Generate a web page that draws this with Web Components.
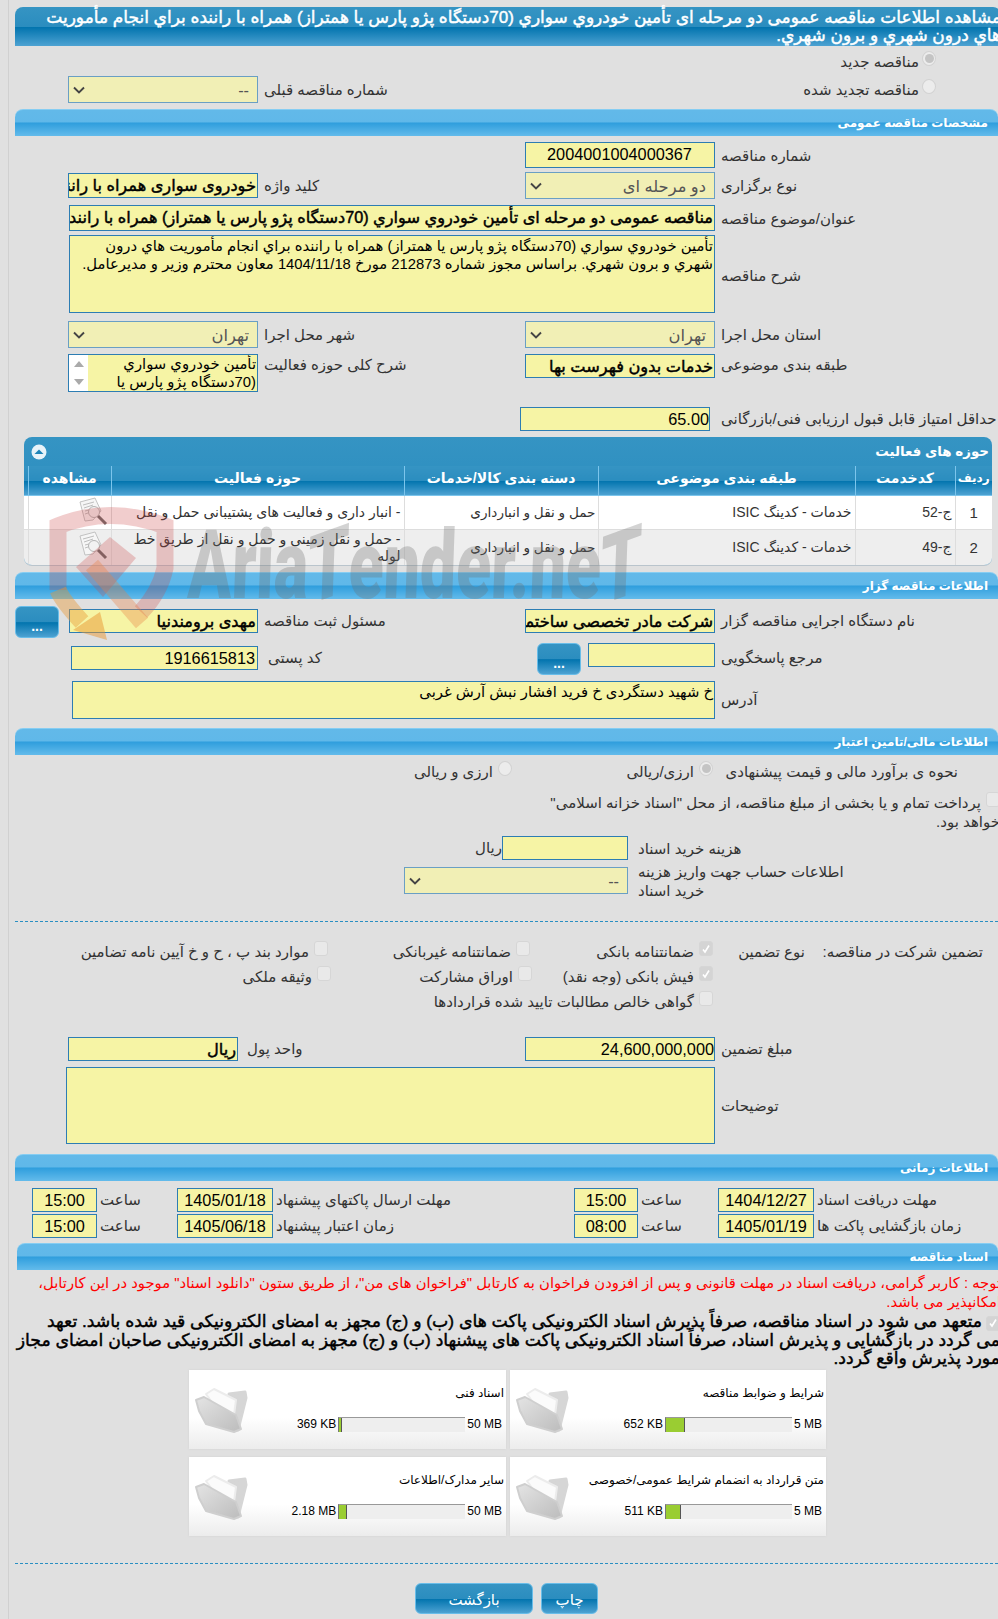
<!DOCTYPE html>
<html lang="fa" dir="rtl">
<head>
<meta charset="utf-8">
<title>AriaTender</title>
<style>
    html, body { margin: 0; padding: 0; background: #e0e0e0; overflow: hidden; }
    body {
        width: 998px;
        height: 1619px;
        position: relative;
        font-family: "Liberation Sans", "DejaVu Sans", sans-serif;
        font-size: 15px;
        color: #333;
    }
    #page {
        margin-left: 8px;
        padding-left: 6px;
        padding-top: 7px;
        height: 1612px;
        border-left: 1px solid #d0d0d0;
    }
</style>
</head>
<body>
<div id="page">
    <ta-bar kind="title">مشاهده اطلاعات مناقصه عمومی دو مرحله ای تأمین خودروي سواري (70دستگاه پژو پارس یا همتراز) همراه با راننده براي انجام مأموريت<br>هاي درون شهري و برون شهري.</ta-bar>

    <ta-form-row style="height:30px">
        <ta-option style="grid-column:1/3;margin-right:62px;margin-top:6px;gap:3px" type="radio" checked>مناقصه جدید</ta-option>
    </ta-form-row>
    <ta-form-row style="height:26px">
        <ta-option style="grid-column:1/3;margin-right:62px;margin-top:4px;gap:3px" type="radio">مناقصه تجدید شده</ta-option>
        <ta-label style="grid-column:3">شماره مناقصه قبلی</ta-label>
        <ta-select style="grid-column:4">--</ta-select>
    </ta-form-row>

    <ta-bar style="margin-top:7px">مشخصات مناقصه عمومی</ta-bar>

    <ta-form-row style="margin-top:6px;height:24px">
        <ta-label style="padding-top:2px">شماره مناقصه</ta-label>
        <ta-input align="center">2004001004000367</ta-input>
    </ta-form-row>
    <ta-form-row style="margin-top:6px;height:27px">
        <ta-label>نوع برگزاری</ta-label>
        <ta-select>دو مرحله ای</ta-select>
        <ta-label>کلید واژه</ta-label>
        <ta-input bold style="height:25px;margin-top:1px">خودروی سواری همراه با راننده</ta-input>
    </ta-form-row>
    <ta-form-row style="margin-top:6px;height:24px">
        <ta-label style="padding-top:2px">عنوان/موضوع مناقصه</ta-label>
        <ta-input bold style="grid-column:2/5;width:646px">مناقصه عمومی دو مرحله ای تأمین خودروي سواري (70دستگاه پژو پارس یا همتراز) همراه با راننده</ta-input>
    </ta-form-row>
    <ta-form-row style="margin-top:6px;height:78px">
        <ta-label style="padding-top:4px">شرح مناقصه</ta-label>
        <ta-input multi style="grid-column:2/5;width:646px">تأمین خودروي سواري (70دستگاه پژو پارس یا همتراز) همراه با راننده براي انجام مأموريت هاي درون<br>شهري و برون شهري. براساس مجوز شماره 212873 مورخ 1404/11/18 معاون محترم وزیر و مدیرعامل.</ta-input>
    </ta-form-row>
    <ta-form-row style="margin-top:8px;height:27px">
        <ta-label>استان محل اجرا</ta-label>
        <ta-select>تهران</ta-select>
        <ta-label>شهر محل اجرا</ta-label>
        <ta-select>تهران</ta-select>
    </ta-form-row>
    <ta-form-row style="margin-top:6px;height:38px">
        <ta-label style="height:22px">طبقه بندی موضوعی</ta-label>
        <ta-input bold style="height:24px">خدمات بدون فهرست بها</ta-input>
        <ta-label style="height:22px">شرح کلی حوزه فعالیت</ta-label>
        <ta-input multi scroll style="height:38px">تأمین خودروي سواري<br>(70دستگاه پژو پارس یا</ta-input>
    </ta-form-row>
    <ta-form-row style="margin-top:15px;height:24px">
        <ta-label>حداقل امتیاز قابل قبول ارزیابی فنی/بازرگانی</ta-label>
        <ta-input align="right" style="margin-right:5px">65.00</ta-input>
    </ta-form-row>

    <ta-panel heading="حوزه های فعالیت" style="margin-top:6px"></ta-panel>

    <ta-bar style="margin-top:6px">اطلاعات مناقصه گزار</ta-bar>

    <ta-form-row style="margin-top:7px;height:31px">
        <ta-label style="margin-top:3px;height:24px">نام دستگاه اجرایی مناقصه گزار</ta-label>
        <ta-input bold style="margin-top:3px;height:24px">شرکت مادر تخصصی ساختمان</ta-input>
        <ta-label style="margin-top:3px;height:24px">مسئول ثبت مناقصه</ta-label>
        <ta-input bold style="margin-top:3px;height:24px;width:189px">مهدی برومندنیا</ta-input>
        <ta-button style="justify-self:end">...</ta-button>
    </ta-form-row>
    <ta-form-row style="margin-top:6px;height:32px">
        <ta-label style="height:24px;margin-top:3px">مرجع پاسخگویی</ta-label>
        <div style="display:flex;gap:7px">
            <ta-input style="width:127px;height:24px"></ta-input>
            <ta-button>...</ta-button>
        </div>
        <ta-label style="margin-top:3px;height:24px;padding-left:10px">کد پستی</ta-label>
        <ta-input align="digits" style="margin-top:3px;height:24px;width:187px">1916615813</ta-input>
    </ta-form-row>
    <ta-form-row style="margin-top:6px;height:38px">
        <ta-label>آدرس</ta-label>
        <ta-input multi style="grid-column:2/5;width:643px">خ شهید دستگردی خ فرید افشار نبش آرش غربی</ta-input>
    </ta-form-row>

    <ta-bar style="margin-top:9px">اطلاعات مالی/تامین اعتبار</ta-bar>

    <ta-flow-row style="margin-top:7px;height:24px;padding-right:40px">
        <ta-label plain style="width:245px">نحوه ی برآورد مالی و قیمت پیشنهادی</ta-label>
        <ta-option type="radio" checked style="width:201px">ارزی/ریالی</ta-option>
        <ta-option type="radio">ارزی و ریالی</ta-option>
    </ta-flow-row>
    <ta-flow-row style="margin-top:7px;height:43px;margin-right:-2px;">
        <ta-option type="check">پرداخت تمام و یا بخشی از مبلغ مناقصه، از محل "اسناد خزانه اسلامی"<br><span style="margin-right:-19px">خواهد بود.</span></ta-option>
    </ta-flow-row>
    <ta-flow-row style="height:25px;padding-right:150px">
        <ta-label style="width:210px;padding-left:0">هزینه خرید اسناد</ta-label>
        <ta-input style="width:126px;height:24px;margin-right:10px"></ta-input>
        <span>ریال</span>
    </ta-flow-row>
    <ta-flow-row style="margin-top:6px;height:27px;padding-right:150px">
        <ta-label plain style="width:210px;margin-top:-5px;text-align:left">اطلاعات حساب جهت واریز هزینه<br>خرید اسناد</ta-label>
        <ta-select style="width:224px;margin-right:10px">--</ta-select>
    </ta-flow-row>

    <ta-rule style="margin-top:27px"></ta-rule>

    <ta-flow-row style="margin-top:20px;height:25px;padding-right:15px">
        <ta-label plain style="width:178px">تضمین شرکت در مناقصه:</ta-label>
        <ta-label plain style="width:92px">نوع تضمین</ta-label>
        <ta-option type="check" checked style="width:183px">ضمانتنامه بانکی</ta-option>
        <ta-option type="check" style="width:202px">ضمانتنامه غیربانکی</ta-option>
        <ta-option type="check">موارد بند پ ، ح و خ آیین نامه تضامین</ta-option>
    </ta-flow-row>
    <ta-flow-row style="height:25px;padding-right:285px">
        <ta-option type="check" checked style="width:181px">فیش بانکی (وجه نقد)</ta-option>
        <ta-option type="check" style="width:201px">اوراق مشارکت</ta-option>
        <ta-option type="check">وثیقه ملکی</ta-option>
    </ta-flow-row>
    <ta-flow-row style="height:25px;padding-right:285px">
        <ta-option type="check">گواهی خالص مطالبات تایید شده قراردادها</ta-option>
    </ta-flow-row>

    <ta-form-row style="margin-top:20px;height:24px">
        <ta-label>مبلغ تضمین</ta-label>
        <ta-input align="right">24,600,000,000</ta-input>
        <ta-label style="padding-left:9px;grid-column:3/4;margin-left:-20px">واحد پول</ta-label>
        <ta-input bold style="width:170px;margin-right:20px">ریال</ta-input>
    </ta-form-row>
    <ta-form-row style="margin-top:6px;height:77px">
        <ta-label>توضیحات</ta-label>
        <ta-input multi style="grid-column:2/5;width:649px"></ta-input>
    </ta-form-row>

    <ta-bar style="margin-top:10px">اطلاعات زمانی</ta-bar>

    <ta-time-row style="margin-top:7px" label1="مهلت دریافت اسناد" date1="1404/12/27" time1="15:00"
                 label2="مهلت ارسال پاکتهای پیشنهاد" date2="1405/01/18" time2="15:00"></ta-time-row>
    <ta-time-row style="margin-top:2px" label1="زمان بازگشایی پاکت ها" date1="1405/01/19" time1="08:00"
                 label2="زمان اعتبار پیشنهاد" date2="1405/06/18" time2="15:00"></ta-time-row>

    <ta-bar style="margin-top:5px;margin-left:2px">اسناد مناقصه</ta-bar>

    <ta-notice style="margin-top:4px">توجه : کاربر گرامی، دریافت اسناد در مهلت قانونی و پس از افزودن فراخوان به کارتابل "فراخوان های من"، از طریق ستون "دانلود اسناد" موجود در این کارتابل،<br>امکانپذیر می باشد.</ta-notice>
    <ta-pledge>متعهد می شود در اسناد مناقصه، صرفاً پذیرش اسناد الکترونیکی پاکت های (ب) و (ج) مجهز به امضای الکترونیکی قید شده باشد. تعهد<br>می گردد در بازگشایی و پذیرش اسناد، صرفاً اسناد الکترونیکی پاکت های پیشنهاد (ب) و (ج) مجهز به امضای الکترونیکی صاحبان امضای مجاز<br>مورد پذیرش واقع گردد.</ta-pledge>

    <ta-card-grid style="margin-top:2.5px">
        <ta-card title="شرایط و ضوابط مناقصه" used="652 KB" max="5 MB" fill="18"></ta-card>
        <ta-card title="اسناد فنی" used="369 KB" max="50 MB" fill="2"></ta-card>
        <ta-card title="متن قرارداد به انضمام شرایط عمومی/خصوصی" used="511 KB" max="5 MB" fill="14"></ta-card>
        <ta-card title="سایر مدارک/اطلاعات" used="2.18 MB" max="50 MB" fill="7"></ta-card>
    </ta-card-grid>

    <ta-rule style="margin-top:27px"></ta-rule>

    <div style="display:flex;gap:8px;margin-top:19px;padding-right:400px">
        <ta-button wide style="width:57px;height:31px">چاپ</ta-button>
        <ta-button wide style="width:118px;height:31px">بازگشت</ta-button>
    </div>
</div>
<ta-watermark></ta-watermark>

<script>
class ShadowBase extends HTMLElement {
    constructor() {
        super();
        this.attachShadow({ mode: 'open' });
    }

    connectedCallback() {
        this.render();
    }
}

const GLASS = 'linear-gradient(#3594c3 0, #2b8dbf 50%, #0274ae 52%, #4da2d2 100%)';
const FAUX_BOLD = '-webkit-text-stroke: .45px currentColor;';

class TaBar extends ShadowBase {
    render() {
        const title = this.getAttribute('kind') === 'title';
        this.shadowRoot.innerHTML = `
            <style>
                :host {
                    display: block;
                    box-sizing: border-box;
                    border-radius: 8px 8px 0 0;
                    color: #fff;
                    white-space: nowrap;
                    ${title
                        ? `height: 39px; margin-right: -3px; padding-top: 2px; font-size: 17px; line-height: 18px; ${FAUX_BOLD}
                           background: ${GLASS};`
                        : `height: 27px; padding: 0 10px 0 0; font-size: 12px; font-weight: bold; line-height: 26px;
                           border-top: 1px solid #86cdf2;
                           background: linear-gradient(#62b9e9 0, #60b8e9 46%, #2f9edd 50%, #63bbeb 100%);`}
                }
            </style>
            <slot></slot>
        `;
    }
}

class TaFormRow extends ShadowBase {
    render() {
        // right label | right control | left label | left control | remainder
        this.shadowRoot.innerHTML = `
            <style>
                :host {
                    display: grid;
                    grid-template-columns: 283px 190px 267px 190px 53px;
                    align-items: start;
                    line-height: 24px;
                }
            </style>
            <slot></slot>
        `;
    }
}

class TaFlowRow extends ShadowBase {
    render() {
        this.shadowRoot.innerHTML = `
            <style>
                :host { display: flex; align-items: flex-start; line-height: 24px; }
            </style>
            <slot></slot>
        `;
    }
}

class TaLabel extends ShadowBase {
    render() {
        this.shadowRoot.innerHTML = `
            <style>
                :host {
                    display: flex;
                    align-items: center;
                    justify-content: flex-end;
                    height: 100%;
                    box-sizing: border-box;
                    padding-left: 6px;
                    white-space: nowrap;
                }
                :host([plain]) { display: block; padding-left: 0; height: auto; line-height: 19px; }
            </style>
            <slot></slot>
        `;
    }
}

class TaInput extends ShadowBase {
    render() {
        this.shadowRoot.innerHTML = `
            <style>
                :host {
                    display: block;
                    box-sizing: border-box;
                    width: 190px;
                    height: 100%;
                    overflow: hidden;
                    background: #f6f4a5;
                    border: 1px solid #2d7db3;
                    color: #000;
                    line-height: 22px;
                    white-space: nowrap;
                    padding-right: 1px;
                }
                :host([bold]) { font-size: 16.2px; ${FAUX_BOLD} }
                :host([align]) { font-size: 16.3px; }
                :host([align="center"]) { text-align: center; }
                :host([align="right"]) { direction: ltr; text-align: right; padding-right: 0; }
                :host([align="digits"]) { padding-right: 2px; }
                :host([multi]) { font-size: 14.8px; line-height: 18px; padding-top: 1px; }
                :host([scroll]) { display: flex; padding: 0; }
                .text { flex: 1; padding-right: 1px; overflow: hidden; }
                .bar {
                    order: 2;
                    width: 19px;
                    background: #fff;
                    display: flex;
                    flex-direction: column;
                    justify-content: space-between;
                    align-items: center;
                    padding: 6px 0;
                    box-sizing: border-box;
                }
                .up, .down { width: 0; height: 0; border: 5px solid transparent; border-top-width: 0; border-bottom: 6px solid #aaa; }
                .down { transform: rotate(180deg); }
            </style>
            ${this.hasAttribute('scroll')
                ? `<div class="text"><slot></slot></div><div class="bar"><i class="up"></i><i class="down"></i></div>`
                : `<slot></slot>`}
        `;
    }
}

class TaSelect extends ShadowBase {
    render() {
        this.shadowRoot.innerHTML = `
            <style>
                :host {
                    display: flex;
                    align-items: center;
                    justify-content: space-between;
                    box-sizing: border-box;
                    width: 190px;
                    height: 27px;
                    padding: 0 8px 0 4px;
                    background: #f1efb5;
                    border: 1px solid #6a9fc4;
                    color: #555;
                    font-size: 16.3px;
                }
                svg { flex: none; }
            </style>
            <span><slot></slot></span>
            <svg width="12" height="8" viewBox="0 0 12 8"><path d="M1 1.5l5 5 5-5" fill="none" stroke="#444" stroke-width="1.9"/></svg>
        `;
    }
}

class TaOption extends ShadowBase {
    render() {
        const radio = this.getAttribute('type') === 'radio';
        const checked = this.hasAttribute('checked');
        const box = radio
            ? `<span class="mark radio">${checked ? '<i></i>' : ''}</span>`
            : `<span class="mark box${checked ? ' on' : ''}">${checked ? '<svg width="10" height="10" viewBox="0 0 10 10"><path d="M2 5.5l2 2.5L8 1.5" fill="none" stroke="#fff" stroke-width="1.6"/></svg>' : ''}</span>`;
        this.shadowRoot.innerHTML = `
            <style>
                :host { display: flex; align-items: flex-start; gap: 5px; line-height: 19px; color: #333; box-sizing: border-box; white-space: nowrap; }
                .mark { flex: none; box-sizing: border-box; width: 14px; height: 15px; display: flex; align-items: center; justify-content: center; margin-top: -1px; }
                .radio { border: 1px solid #d2d2d2; border-radius: 50%; background: #ececec; }
                .radio i { width: 9px; height: 9px; border-radius: 50%; background: #c4c4c4; }
                .box { border: 1px solid #d6d6d6; border-radius: 3px; background: #e9e9e9; }
                .box.on { background: #d4d4d4; }
            </style>
            ${box}
            <span><slot></slot></span>
        `;
    }
}

class TaRule extends ShadowBase {
    render() {
        this.shadowRoot.innerHTML = `
            <style>
                :host { display: block; height: 0; border-top: 1px dashed #2a8fc2; }
            </style>
        `;
    }
}

class TaButton extends ShadowBase {
    render() {
        this.shadowRoot.innerHTML = `
            <style>
                :host {
                    display: flex;
                    align-items: flex-end;
                    justify-content: center;
                    box-sizing: border-box;
                    width: 44px;
                    height: 32px;
                    border: 1px solid #68bde9;
                    border-radius: 6px;
                    background: ${GLASS};
                    color: #fff;
                    font-weight: bold;
                    font-size: 14px;
                    line-height: 22px;
                }
                :host([wide]) { align-items: center; font-weight: normal; font-size: 15px; padding-top: 3px; }
            </style>
            <slot></slot>
        `;
    }
}

class TaPanel extends ShadowBase {
    render() {
        const rows = [
            ['1', 'ج-52', 'خدمات - کدینگ ISIC', 'حمل و نقل و انبارداری', '- انبار داری و فعالیت های پشتیبانی حمل و نقل'],
            ['2', 'ج-49', 'خدمات - کدینگ ISIC', 'حمل و نقل و انبارداری', '- حمل و نقل زمینی و حمل و نقل از طریق خط لوله']
        ];
        const icon = `
            <svg width="32" height="32" viewBox="0 0 32 32">
                <path d="M3 6l15-4 6 13-8 9-8 1z" fill="#f6f6f6" stroke="#c2c2c2"/>
                <path d="M6 9l11-3M7 12l9-3M8 15l4-1M8 18l3-1" stroke="#bdbdbd" fill="none"/>
                <circle cx="17" cy="16" r="5.5" fill="#f2f2f2" stroke="#b4b4b4"/>
                <path d="M21 20l8 8" stroke="#6a6a6a" stroke-width="3"/>
            </svg>`;
        this.shadowRoot.innerHTML = `
            <style>
                :host {
                    display: block;
                    box-sizing: border-box;
                    margin: 0 6px 0 9px;
                    width: 968px;
                    height: 129px;
                    border-radius: 8px;
                    overflow: hidden;
                    background: ${GLASS};
                    border-bottom: 1px solid #b9c4cc;
                    font-size: 14px;
                }
                .head {
                    display: flex;
                    justify-content: space-between;
                    align-items: center;
                    height: 29px;
                    padding: 0 3px 0 7px;
                    color: #fff;
                    font-weight: bold;
                    font-size: 13.4px;
                }
                .head svg { flex: none; }
                table { width: 100%; border-collapse: collapse; table-layout: fixed; }
                th {
                    height: 29px;
                    padding: 0 0 4px;
                    box-sizing: border-box;
                    color: #fff;
                    font-size: 14px;
                    white-space: nowrap;
                    background: ${GLASS};
                    border-left: 1px solid #7cc5ec;
                    border-bottom: 1px solid #7cc5ec;
                }
                th.tight { font-size: 12px; }
                td {
                    padding: 0 3px;
                    color: #333;
                    line-height: 17px;
                    text-align: right;
                    border-left: 1px solid #dddddd;
                    border-bottom: 1px solid #dddddd;
                }
                td.num { text-align: center; font-size: 15px; }
                td.cat { font-size: 13.6px; padding-right: 2px; }
                td.view { padding: 0; vertical-align: top; }
                td.view svg { display: block; margin-right: 2px; }
                tr.a td { background: #fff; height: 33px; }
                tr.b td { background: #eeeeee; height: 36px; border-bottom: 0; }
            </style>
            <div class="head">
                <span>${this.getAttribute('heading')}</span>
                <svg width="16" height="16" viewBox="0 0 16 16"><circle cx="8" cy="8" r="7.5" fill="#e8f3f9"/><path d="M3.5 10L8 5.5l4.5 4.5z" fill="#1f84b8"/></svg>
            </div>
            <table>
                <colgroup><col style="width:37px"><col style="width:100px"><col style="width:257px"><col style="width:194px"><col style="width:293px"><col style="width:83px"><col></colgroup>
                <tr>
                    <th class="tight">ردیف</th><th>کدخدمت</th><th>طبقه بندی موضوعی</th><th>دسته بندی کالا/خدمات</th><th>حوزه فعالیت</th><th>مشاهده</th><th style="border-left:0"></th>
                </tr>
                ${rows.map((r, i) => `
                    <tr class="${i ? 'b' : 'a'}">
                        <td class="num">${r[0]}</td><td>${r[1]}</td><td>${r[2]}</td><td class="cat">${r[3]}</td><td>${r[4]}</td>
                        <td class="view">${icon}</td><td style="border-left:0"></td>
                    </tr>`).join('')}
            </table>
        `;
    }
}

class TaTimeRow extends ShadowBase {
    render() {
        const a = n => this.getAttribute(n);
        const box = text => `<span class="box">${text}</span>`;
        this.shadowRoot.innerHTML = `
            <style>
                :host {
                    display: grid;
                    grid-template-columns: 184px 96px 80px 64px 301px 96px 80px 65px;
                    height: 24px;
                    align-items: center;
                    white-space: nowrap;
                }
                .lbl { text-align: left; padding-left: 3px; }
                .box {
                    box-sizing: border-box;
                    height: 24px;
                    background: #f6f4a5;
                    border: 1px solid #2d7db3;
                    color: #000;
                    font-size: 16.3px;
                    line-height: 23px;
                    text-align: center;
                }
            </style>
            <span class="lbl">${a('label1')}</span>${box(a('date1'))}
            <span class="lbl">ساعت</span>${box(a('time1'))}
            <span class="lbl">${a('label2')}</span>${box(a('date2'))}
            <span class="lbl">ساعت</span>${box(a('time2'))}
        `;
    }
}

class TaNotice extends ShadowBase {
    render() {
        this.shadowRoot.innerHTML = `
            <style>
                :host {
                    display: block;
                    margin-right: -3px;
                    color: #f00;
                    font-size: 14.8px;
                    line-height: 19px;
                    white-space: nowrap;
                }
            </style>
            <slot></slot>
        `;
    }
}

class TaPledge extends ShadowBase {
    render() {
        this.shadowRoot.innerHTML = `
            <style>
                :host {
                    display: block;
                    height: 55.5px;
                    margin-right: -2px;
                    color: #000;
                    font-size: 17.3px;
                    line-height: 18.5px;
                    white-space: nowrap;
                    ${FAUX_BOLD}
                }
                .box {
                    display: inline-flex;
                    vertical-align: -1px;
                    width: 14px;
                    height: 15px;
                    margin: -4px 0 -4px 4px;
                    box-sizing: border-box;
                    align-items: center;
                    justify-content: center;
                    background: #d4d4d4;
                    border: 1px solid #d6d6d6;
                    border-radius: 3px;
                }
            </style>
            <span class="box"><svg width="10" height="10" viewBox="0 0 10 10"><path d="M2 5.5l2 2.5L8 1.5" fill="none" stroke="#fff" stroke-width="1.6"/></svg></span><slot></slot>
        `;
    }
}

class TaCardGrid extends ShadowBase {
    render() {
        this.shadowRoot.innerHTML = `
            <style>
                :host {
                    display: grid;
                    grid-template-columns: 316px 317px;
                    grid-auto-rows: 79px;
                    gap: 8px 4px;
                    margin-right: 172px;
                }
            </style>
            <slot></slot>
        `;
    }
}

class TaCard extends ShadowBase {
    render() {
        const a = n => this.getAttribute(n);
        this.shadowRoot.innerHTML = `
            <style>
                :host {
                    display: grid;
                    grid-template-columns: 1fr 56px;
                    box-sizing: border-box;
                    padding: 14px 2px 0 4px;
                    background: linear-gradient(#fff 0, #fff 60%, #ececec 100%);
                    box-shadow: 0 0 2px #d0d0d0;
                    color: #000;
                    font-size: 12px;
                }
                .info { display: flex; flex-direction: column; }
                .title { height: 33px; line-height: 18px; white-space: nowrap; }
                .meter { display: flex; align-items: center; gap: 2px; height: 15px; line-height: 15px; direction: ltr; justify-content: flex-end; padding-right: 2px; }
                .bar {
                    width: 127px;
                    height: 15px;
                    box-sizing: border-box;
                    background: #eeeeee;
                    border-top: 1px solid #999;
                    border-left: 1px solid #777;
                }
                .fill { display: block; height: 100%; background: #9acd32; border-right: 1px solid #555; }
                .folder { margin-top: 2px; overflow: visible; }
            </style>
            <div class="info">
                <div class="title">${a('title')}</div>
                <div class="meter">
                    <span>${a('used')}</span>
                    <div class="bar"><i class="fill" style="width:${a('fill')}px"></i></div>
                    <span>${a('max')}</span>
                </div>
            </div>
            <svg class="folder" width="54" height="50" viewBox="0 0 54 50" stroke-linejoin="round">
                <defs>
                    <linearGradient id="f" x1="0" y1="0" x2="1" y2="1"><stop offset="0" stop-color="#e4e4e4"/><stop offset="1" stop-color="#bcbcbc"/></linearGradient>
                </defs>
                <path d="M34 8l16-2 1 6-8 32-10-8z" fill="#d6d6d6" stroke="#d6d6d6" stroke-width="3"/>
                <path d="M11 8l8-5 22 11-2 15-20-10z" fill="#fbfbfb" stroke="#ececec" stroke-width="2"/>
                <path d="M1 14l8-3 32 18 5 14-7 3-28-8-7-13z" fill="url(#f)" stroke="#cfcfcf" stroke-width="2"/>
            </svg>
        `;
    }
}

class TaWatermark extends ShadowBase {
    render() {
        this.shadowRoot.innerHTML = `
            <style>
                :host {
                    position: absolute;
                    left: 40px;
                    top: 490px;
                    width: 620px;
                    height: 160px;
                    pointer-events: none;
                }
                svg { position: absolute; left: 0; top: 0; }
                .word {
                    position: absolute;
                    left: 150px;
                    top: 25px;
                    direction: ltr;
                    white-space: nowrap;
                    font-family: "Roboto", "Liberation Sans", sans-serif;
                    font-weight: 900;
                    font-size: 96px;
                    line-height: 100px;
                    color: rgba(110, 110, 110, .3);
                    transform-origin: left top;
                    transform: scaleX(.67) skewX(-3deg);
                }
                .t { display: inline-block; transform: skewY(-14deg); }
            </style>
            <svg width="150" height="160" viewBox="40 490 150 160">
                <path d="M58 590V526Q110 505 165 526V568Q160 592 141 612" fill="none" stroke="rgba(205,70,70,.27)" stroke-width="17"/>
                <path d="M58 590Q62 600 82 622" fill="none" stroke="rgba(232,150,50,.42)" stroke-width="17"/>
                <path d="M100 612l7 28-34-10z" fill="rgba(232,150,50,.5)"/>
                <path d="M76 567l34-30 26 21-33 39z" fill="rgba(205,70,70,.27)"/>
                <path d="M92 565l50 58" stroke="rgba(232,130,70,.35)" stroke-width="16"/>
            </svg>
            <div class="word">Aria<span class="t">T</span>ender.ne<span class="t">T</span></div>
        `;
    }
}

customElements.define('ta-bar', TaBar);
customElements.define('ta-form-row', TaFormRow);
customElements.define('ta-flow-row', TaFlowRow);
customElements.define('ta-label', TaLabel);
customElements.define('ta-input', TaInput);
customElements.define('ta-select', TaSelect);
customElements.define('ta-option', TaOption);
customElements.define('ta-rule', TaRule);
customElements.define('ta-button', TaButton);
customElements.define('ta-panel', TaPanel);
customElements.define('ta-time-row', TaTimeRow);
customElements.define('ta-notice', TaNotice);
customElements.define('ta-pledge', TaPledge);
customElements.define('ta-card-grid', TaCardGrid);
customElements.define('ta-card', TaCard);
customElements.define('ta-watermark', TaWatermark);
</script>
</body>
</html>
